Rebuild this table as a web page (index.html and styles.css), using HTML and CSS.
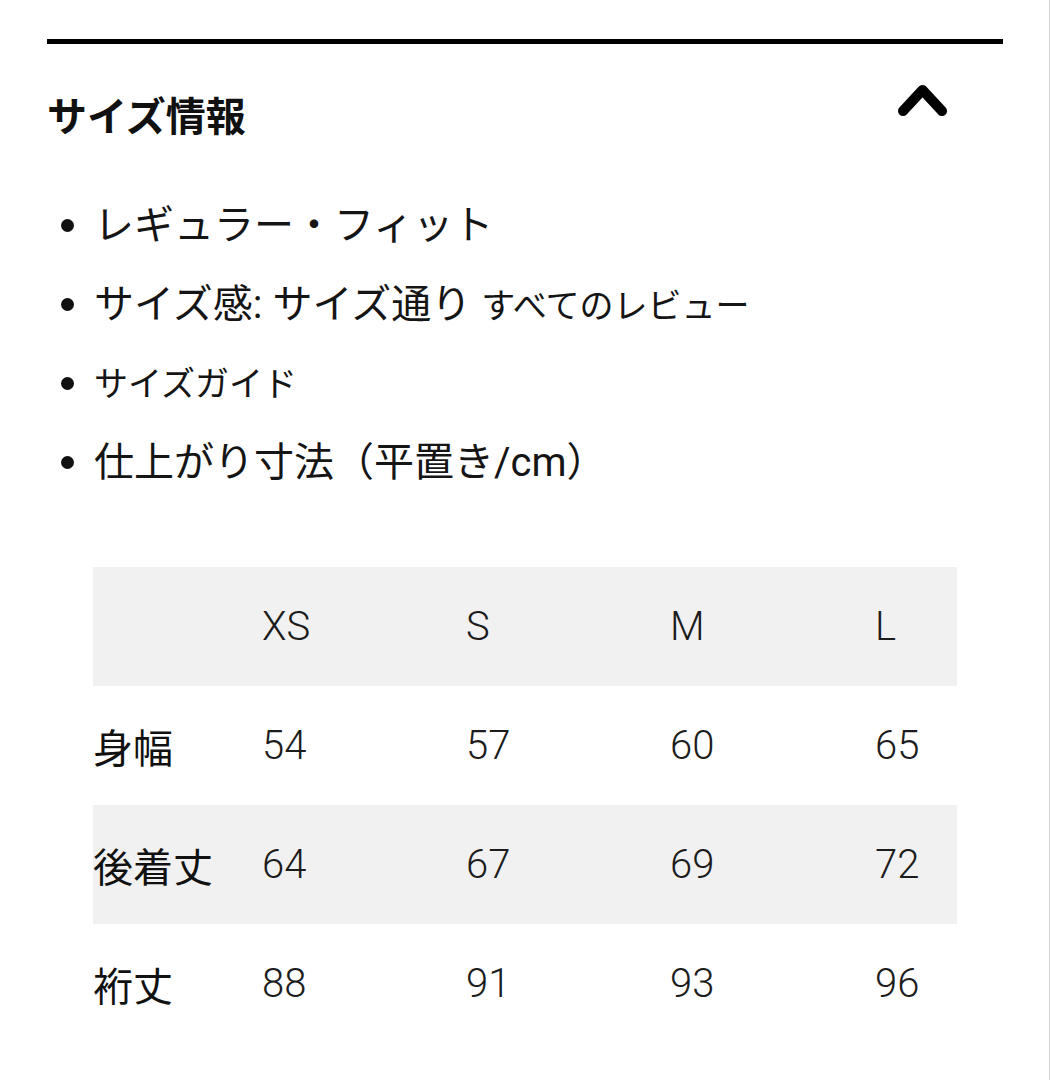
FILE: index.html
```html
<!DOCTYPE html>
<html lang="ja">
<head>
<meta charset="utf-8">
<title>サイズ情報</title>
<link rel="stylesheet" href="styles.css">
</head>
<body>
<div class="page">
  <div class="section">
    <div class="rule"></div>
    <div class="header">
      <h2 class="title">サイズ情報</h2>
      <svg class="chevron" width="49" height="31" viewBox="0 0 49 31" aria-hidden="true">
        <polyline points="5,26 24.5,5 44,26" fill="none" stroke="#000" stroke-width="10" stroke-linecap="round" stroke-linejoin="round"/>
      </svg>
    </div>
    <ul class="info-list">
      <li class="item"><span class="dot"></span><span class="text">レギュラー・フィット</span></li>
      <li class="item"><span class="dot"></span><span class="text">サイズ感: サイズ通り <span class="small">すべてのレビュー</span></span></li>
      <li class="item"><span class="dot"></span><span class="text small">サイズガイド</span></li>
      <li class="item"><span class="dot"></span><span class="text">仕上がり寸法（平置き/cm）</span></li>
    </ul>
    <div class="size-table">
      <div class="row shaded">
        <div class="cell label"></div>
        <div class="cell">XS</div>
        <div class="cell">S</div>
        <div class="cell">M</div>
        <div class="cell">L</div>
      </div>
      <div class="row">
        <div class="cell label">身幅</div>
        <div class="cell">54</div>
        <div class="cell">57</div>
        <div class="cell">60</div>
        <div class="cell">65</div>
      </div>
      <div class="row shaded">
        <div class="cell label">後着丈</div>
        <div class="cell">64</div>
        <div class="cell">67</div>
        <div class="cell">69</div>
        <div class="cell">72</div>
      </div>
      <div class="row">
        <div class="cell label">裄丈</div>
        <div class="cell">88</div>
        <div class="cell">91</div>
        <div class="cell">93</div>
        <div class="cell">96</div>
      </div>
    </div>
  </div>
</div>
</body>
</html>
```

FILE: styles.css
```css
* { box-sizing: border-box; }

html, body {
  margin: 0;
  padding: 0;
  background: #fff;
}

body {
  font-family: Roboto, "Noto Sans CJK JP", sans-serif;
  color: #151515;
}

.page {
  width: 1050px;
  min-height: 1080px;
  border-right: 1px solid #d4d4d4;
}

.section {
  padding: 39px 46px 0 47px;
}

.rule {
  height: 5px;
  background: #000;
}

.header {
  display: flex;
  justify-content: space-between;
  align-items: flex-start;
  margin-top: 46px;
}

.title {
  margin: 0;
  font-family: "Noto Sans CJK JP", sans-serif;
  font-size: 40px;
  line-height: 48px;
  font-weight: 700;
  color: #111;
}

.chevron {
  display: block;
  margin-top: -5px;
  margin-right: 56px;
}

.info-list {
  list-style: none;
  margin: 48px 0 0 0;
  padding: 0;
}

.item {
  display: flex;
  align-items: center;
  height: 79px;
  font-size: 40px;
  line-height: 1;
}

.dot {
  width: 13px;
  height: 13px;
  border-radius: 50%;
  background: #111;
  margin-left: 14px;
  margin-right: 20px;
  flex: none;
}

.text {
  white-space: nowrap;
}

.small {
  font-size: 34px;
}

.size-table {
  margin-top: 65px;
  margin-left: 46px;
  width: 864px;
}

.row {
  display: grid;
  grid-template-columns: 169px 204px 204px 205px 82px;
  align-items: center;
  height: 119px;
}

.shaded {
  background: #f1f1f1;
}

.cell {
  font-family: Roboto, "Noto Sans CJK JP", sans-serif;
  font-weight: 300;
  font-size: 40px;
  line-height: 1;
  color: #1c1c1c;
  white-space: nowrap;
}

.label {
  font-family: "Noto Sans CJK JP", sans-serif;
  font-weight: 400;
  color: #111;
}
```
